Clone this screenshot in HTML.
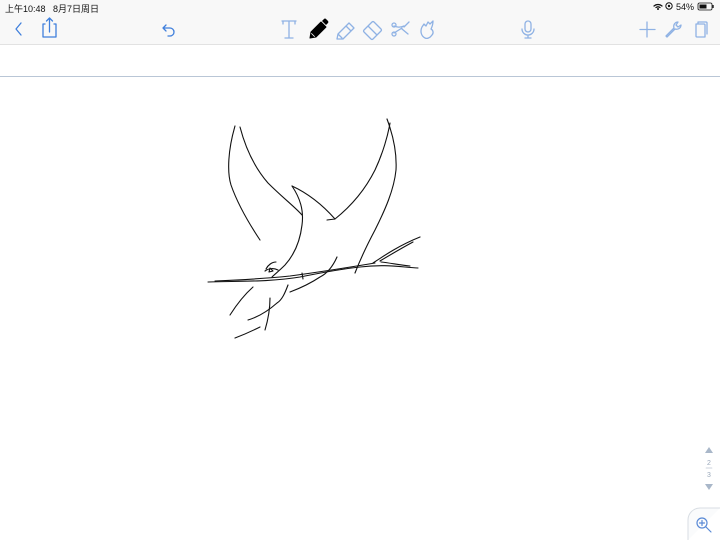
<!DOCTYPE html>
<html><head><meta charset="utf-8"><style>
*{margin:0;padding:0;box-sizing:border-box}
body{width:720px;height:540px;background:#fff;position:relative;overflow:hidden;font-family:"Liberation Sans","Noto Sans CJK SC",sans-serif}
.bar{position:absolute;left:0;top:0;width:720px;height:45px;background:#f8f8f8;border-bottom:1px solid #e2e2e2}
.band{position:absolute;left:0;top:46px;width:720px;height:31px;background:#fff;border-bottom:1px solid #b9c6d6}
.st{position:absolute;top:2px;font-size:9px;color:#111}
svg{position:absolute;left:0;top:0}
</style></head><body>
<div class="bar"></div><div class="band"></div>
<div class="st" style="left:5px">上午10:48&nbsp;&nbsp;&nbsp;8月7日周日</div>
<div class="st" style="left:676px">54%</div>
<svg width="720" height="540" viewBox="0 0 720 540" fill="none" stroke-linecap="round" stroke-linejoin="round">
<path d="M654 6a6 6 0 0 1 8 0M656 7.5a3.5 3.5 0 0 1 4 0" stroke="#111" stroke-width="1.3"/>
<circle cx="658" cy="9" r="1" fill="#111"/>
<circle cx="669" cy="6" r="3.2" stroke="#111" stroke-width="1"/><circle cx="669" cy="6" r="1.2" fill="#111"/>
<rect x="698" y="3" width="14" height="7" rx="1.5" stroke="#111" stroke-width="0.8"/><rect x="699.5" y="4.5" width="7" height="4" fill="#111"/><rect x="712.5" y="5" width="1.2" height="3" fill="#111"/>
<g stroke="#3f7fdc" stroke-width="1.3">
<path d="M21 23l-5 6 5 6"/>
<path d="M45 24h-2v13h13V24h-2M49.5 32V18M46.5 21l3-3 3 3"/>
<path d="M166 25l-3 3 3 3M163 28h7a4 4 0 0 1 0 8h-2"/>
</g>
<g stroke="#8fb2e4" stroke-width="1.3">
<path d="M282 21h14M289 21v17M285 38h8M283 21v3M295 21v3"/>
<path d="M337 39l1-5 11-11 5 5-11 11zM338 34l4 4M346 26l5 5"/>
<path d="M364 30l8-8a1.5 1.5 0 0 1 2 0l7 7a1.5 1.5 0 0 1 0 2l-8 8a1.5 1.5 0 0 1-2 0l-7-7a1.5 1.5 0 0 1 0-2zM368 26l9 9"/>
<path d="M394 26c3 1 5 2 10 0M394 33l8-5M404 27l5-5M402 29l6 5"/><circle cx="394" cy="25" r="2"/><circle cx="394" cy="34" r="2"/>
<path d="M425 38c-4-2-5-7-3-11l2-3 2 2 2-4 2 2 3-3c0 4-1 6-2 8 2 1 3 4 1 6-2 3-5 4-7 3z"/>
<path d="M525 24v5a3 3 0 0 0 6 0v-5a3 3 0 0 0-6 0zM522 29a6 6 0 0 0 12 0M528 35v3M525 38h6"/>
<path d="M647 22v15M640 29.5h15"/>
<path d="M667 37l8-8c3 1 6-1 6-4l-3 2-2-2 2-3c-3 0-5 3-4 6l-8 8z"/>
<path d="M696 24h8a1 1 0 0 1 1 1v12h-8a1 1 0 0 1-1-1zM698 24v-2h8a1 1 0 0 1 1 1v11"/>
</g>
<path d="M310 38l1-6 10-10 5 5-10 10z" fill="#000" stroke="#000" stroke-width="1"/>
<path d="M322 21l2-2a1.5 1.5 0 0 1 2 0l2 2a1.5 1.5 0 0 1 0 2l-2 2z" fill="#000"/>
<path d="M311.5 33.5l3 3" stroke="#fff" stroke-width="0.8"/>
<g stroke="#111" stroke-width="1.1">
<path d="M235 126C228 150 227 172 231 185 238 205 250 225 260 240"/>
<path d="M240 127C246 150 255 168 268 183 283 198 295 207 302 215"/>
<path d="M292 186C300 198 304 210 302 225 300 242 294 255 285 265 279 271 275 274 272 277"/>
<path d="M292 186C305 192 320 202 335 219M327 220L335 219"/>
<path d="M335 219C350 207 365 190 375 170 383 153 388 135 390 123"/>
<path d="M387 119C393 135 397 152 396 170 394 190 385 210 375 230 366 247 360 260 355 273"/>
<path d="M208 282C240 281 270 282 300 277 320 273 340 269 360 267 385 264 400 267 418 268"/>
<path d="M215 281C240 280 260 279 290 276 320 272 345 268 375 263"/>
<path d="M420 237C400 245 385 255 373 263M413 242C400 249 390 255 380 261M381 262C390 263 400 265 410 266"/>
<path d="M337 257C333 266 328 273 320 277 308 285 298 289 290 292"/>
<path d="M288 285C285 293 282 300 277 303 268 311 258 317 248 320"/>
<path d="M270 298C270 310 268 320 265 330"/>
<path d="M253 287C244 295 237 304 230 315"/>
<path d="M260 327C252 331 243 335 235 338"/>
<path d="M266 269C268 265 272 262 276 262M265 271C269 268 274 268 278 270"/>
<path d="M270 268l3 3-4 1z"/>
<path d="M302 273l1 6"/>
</g>
<path d="M705 453l4-6 4 6z" fill="#a9b7c9"/>
<path d="M705 484l4 6 4-6z" fill="#a9b7c9"/>
<text x="709" y="465" font-size="7" fill="#9aa8ba" text-anchor="middle" font-family="Liberation Sans">2</text>
<path d="M706 468h6" stroke="#9aa8ba" stroke-width="0.6"/>
<text x="709" y="477" font-size="7" fill="#9aa8ba" text-anchor="middle" font-family="Liberation Sans">3</text>
<path d="M688 540v-20a12 12 0 0 1 12-12h20" stroke="#d8dde3" fill="#fafbfc"/>
<circle cx="702" cy="523" r="5" stroke="#5a8ad6" stroke-width="1.2"/>
<path d="M706 527l5 5M702 520.5v5M699.5 523h5" stroke="#5a8ad6" stroke-width="1.2"/>
</svg>
</body></html>
